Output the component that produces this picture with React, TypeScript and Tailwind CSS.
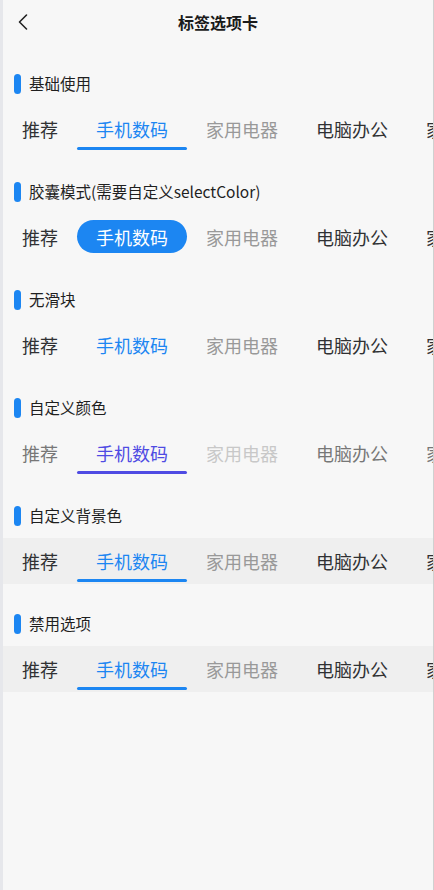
import React from "react";

type Variant = "line" | "capsule" | "none" | "color" | "bg" | "disabled";

const tabs = ["推荐", "手机数码", "家用电器", "电脑办公", "家居家装"];

function TabRow({ variant }: { variant: Variant }) {
  const rowBg = variant === "bg" || variant === "disabled" ? "bg-[#efefef]" : "";
  return (
    <div className={`flex h-[46px] items-stretch overflow-hidden whitespace-nowrap ${rowBg}`}>
      {tabs.map((t, i) => {
        const active = i === 1;
        const disabled = i === 2;
        let color = "text-[#303133]";
        if (variant === "color") color = "text-[#777]";
        if (disabled) color = variant === "color" ? "text-[#c8c8c8]" : "text-[#999]";
        if (active) {
          if (variant === "capsule") color = "text-white";
          else if (variant === "color") color = "text-[#4f4be3]";
          else color = "text-[#1c86f2]";
        }
        return (
          <div key={i} className="relative flex shrink-0 items-center justify-center px-[19px] text-[18px] leading-none">
            {active && variant === "capsule" && (
              <div className="absolute inset-x-0 top-[6px] h-[33px] rounded-full bg-[#1c86f2]" />
            )}
            <span className={`relative ${color}`}>{t}</span>
            {active && variant !== "capsule" && variant !== "none" && (
              <div
                className={`absolute inset-x-0 bottom-[2px] h-[3px] rounded-full ${
                  variant === "color" ? "bg-[#4f4be3]" : "bg-[#1c86f2]"
                }`}
              />
            )}
          </div>
        );
      })}
    </div>
  );
}

function Section({ title, variant }: { title: string; variant: Variant }) {
  return (
    <div className="pt-[18px]">
      <div className="flex h-[44px] items-center pl-[11px]">
        <div className="h-[20px] w-[7px] rounded-full bg-[#1c86f2]" />
        <span className="ml-[8px] text-[15.5px] text-[#1f1f1f]">{title}</span>
      </div>
      <TabRow variant={variant} />
    </div>
  );
}

export default function App() {
  return (
    <div
      className="min-h-[890px] border-l-[3px] border-r border-l-[#e6e7eb] border-r-[#d0d0d0] bg-[#f7f7f7]"
      style={{ fontFamily: '"Noto Sans CJK SC", "Noto Sans", sans-serif' }}
    >
      <div className="relative flex h-[44px] items-center justify-center">
        <svg
          className="absolute left-[12px] top-[13px]"
          width="18"
          height="18"
          viewBox="0 0 18 18"
          fill="none"
        >
          <path d="M11.5 2 L4.5 9 L11.5 16" stroke="#222" strokeWidth="1.6" strokeLinecap="round" strokeLinejoin="round" />
        </svg>
        <span className="text-[16px] font-bold text-[#1a1a1a]">标签选项卡</span>
      </div>
      <Section title="基础使用" variant="line" />
      <Section title="胶囊模式(需要自定义selectColor)" variant="capsule" />
      <Section title="无滑块" variant="none" />
      <Section title="自定义颜色" variant="color" />
      <Section title="自定义背景色" variant="bg" />
      <Section title="禁用选项" variant="disabled" />
    </div>
  );
}
